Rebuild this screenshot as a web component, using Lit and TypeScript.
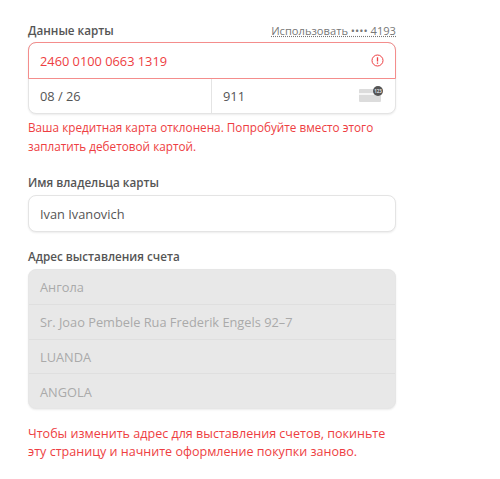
import { LitElement, html, css } from "lit";
import { customElement } from "lit/decorators.js";

@customElement("app-root")
export class AppRoot extends LitElement {
  static styles = css`
    :host {
      display: block;
      width: 500px;
      height: 479px;
      background: #fff;
      font-family: "Open Sans", sans-serif;
      font-size: 12.8px;
      color: #555;
      overflow: hidden;
    }
    .form {
      width: 368px;
      margin-left: 28px;
      padding-top: 22px;
      display: flex;
      flex-direction: column;
    }
    .label-row {
      display: flex;
      justify-content: space-between;
      align-items: baseline;
      height: 20px;
      font-size: 11.7px;
      font-weight: 600;
    }
    .saved {
      font-weight: 400;
      font-size: 11.15px;
      color: #777;
      text-decoration: underline dotted;
    }
    .card {
      border: 1px solid #e4e4e4;
      border-radius: 8px;
      background: #fff;
      box-shadow: 0 1px 2px rgba(0, 0, 0, 0.08);
    }
    .number {
      height: 35px;
      margin: -1px -1px 0;
      border: 1px solid #f48d8c;
      border-radius: 8px 8px 0 0;
      display: flex;
      align-items: center;
      justify-content: space-between;
      padding: 0 11px;
      color: #ee3e42;
    }
    .split {
      display: grid;
      grid-template-columns: 182px 1fr;
      height: 34px;
    }
    .cell {
      display: flex;
      align-items: center;
      justify-content: space-between;
      padding: 0 12px 0 11px;
    }
    .cell + .cell {
      border-left: 1px solid #e4e4e4;
    }
    .cell svg {
      margin-top: -3px;
    }
    .error {
      margin: 4px 0 0;
      font-size: 11.75px;
      color: #ee3e42;
      line-height: 19px;
    }
    .name-label {
      margin-top: 18px;
    }
    .name {
      height: 35px;
      display: flex;
      align-items: center;
      padding: 0 11px;
      margin-top: 1px;
    }
    .addr-label {
      margin-top: 16px;
    }
    .addr {
      margin-top: 1px;
      border-color: #e6e6e6;
      background: #e8e8e8;
      color: #aaa;
      overflow: hidden;
    }
    .addr div {
      height: 32.75px;
      display: flex;
      align-items: center;
      padding: 1px 11px 0;
    }
    .addr div + div {
      border-top: 1px solid #dfdfdf;
    }
    .note {
      margin: 16px 0 0;
      font-size: 12.55px;
      color: #ee3e42;
      line-height: 18px;
    }
  `;

  render() {
    return html`<div class="form">
      <div class="label-row">
        <span>Данные карты</span><span class="saved">Использовать •••• 4193</span>
      </div>
      <div class="card">
        <div class="number">
          <span>2460 0100 0663 1319</span>
          <svg width="13" height="13" viewBox="0 0 13 13" fill="none">
            <circle cx="6.5" cy="6.5" r="5.5" stroke="#ee3e42" />
            <path d="M6.5 3.2v4.2M6.5 8.5v1.2" stroke="#ee3e42" stroke-width="1.3" />
          </svg>
        </div>
        <div class="split">
          <div class="cell">08 / 26</div>
          <div class="cell">
            <span>911</span>
            <svg width="24" height="17" viewBox="0 0 24 17">
              <rect x="0" y="3" width="22" height="13" rx="1" fill="#dcdcdc" />
              <rect x="0" y="7" width="22" height="2" fill="#f6f6f6" />
              <circle cx="19" cy="5" r="5" fill="#555" />
              <text x="19" y="6.6" font-size="4.5" font-weight="700" text-anchor="middle" fill="#ddd">123</text>
            </svg>
          </div>
        </div>
      </div>
      <p class="error">
        Ваша кредитная карта отклонена. Попробуйте вместо этого<br />заплатить дебетовой картой.
      </p>
      <div class="label-row name-label"><span>Имя владельца карты</span></div>
      <div class="card name">Ivan Ivanovich</div>
      <div class="label-row addr-label"><span>Адрес выставления счета</span></div>
      <div class="card addr">
        <div>Ангола</div>
        <div>Sr. Joao Pembele Rua Frederik Engels 92–7</div>
        <div>LUANDA</div>
        <div>ANGOLA</div>
      </div>
      <p class="note">
        Чтобы изменить адрес для выставления счетов, покиньте<br />эту страницу и начните оформление покупки заново.
      </p>
    </div>`;
  }
}
